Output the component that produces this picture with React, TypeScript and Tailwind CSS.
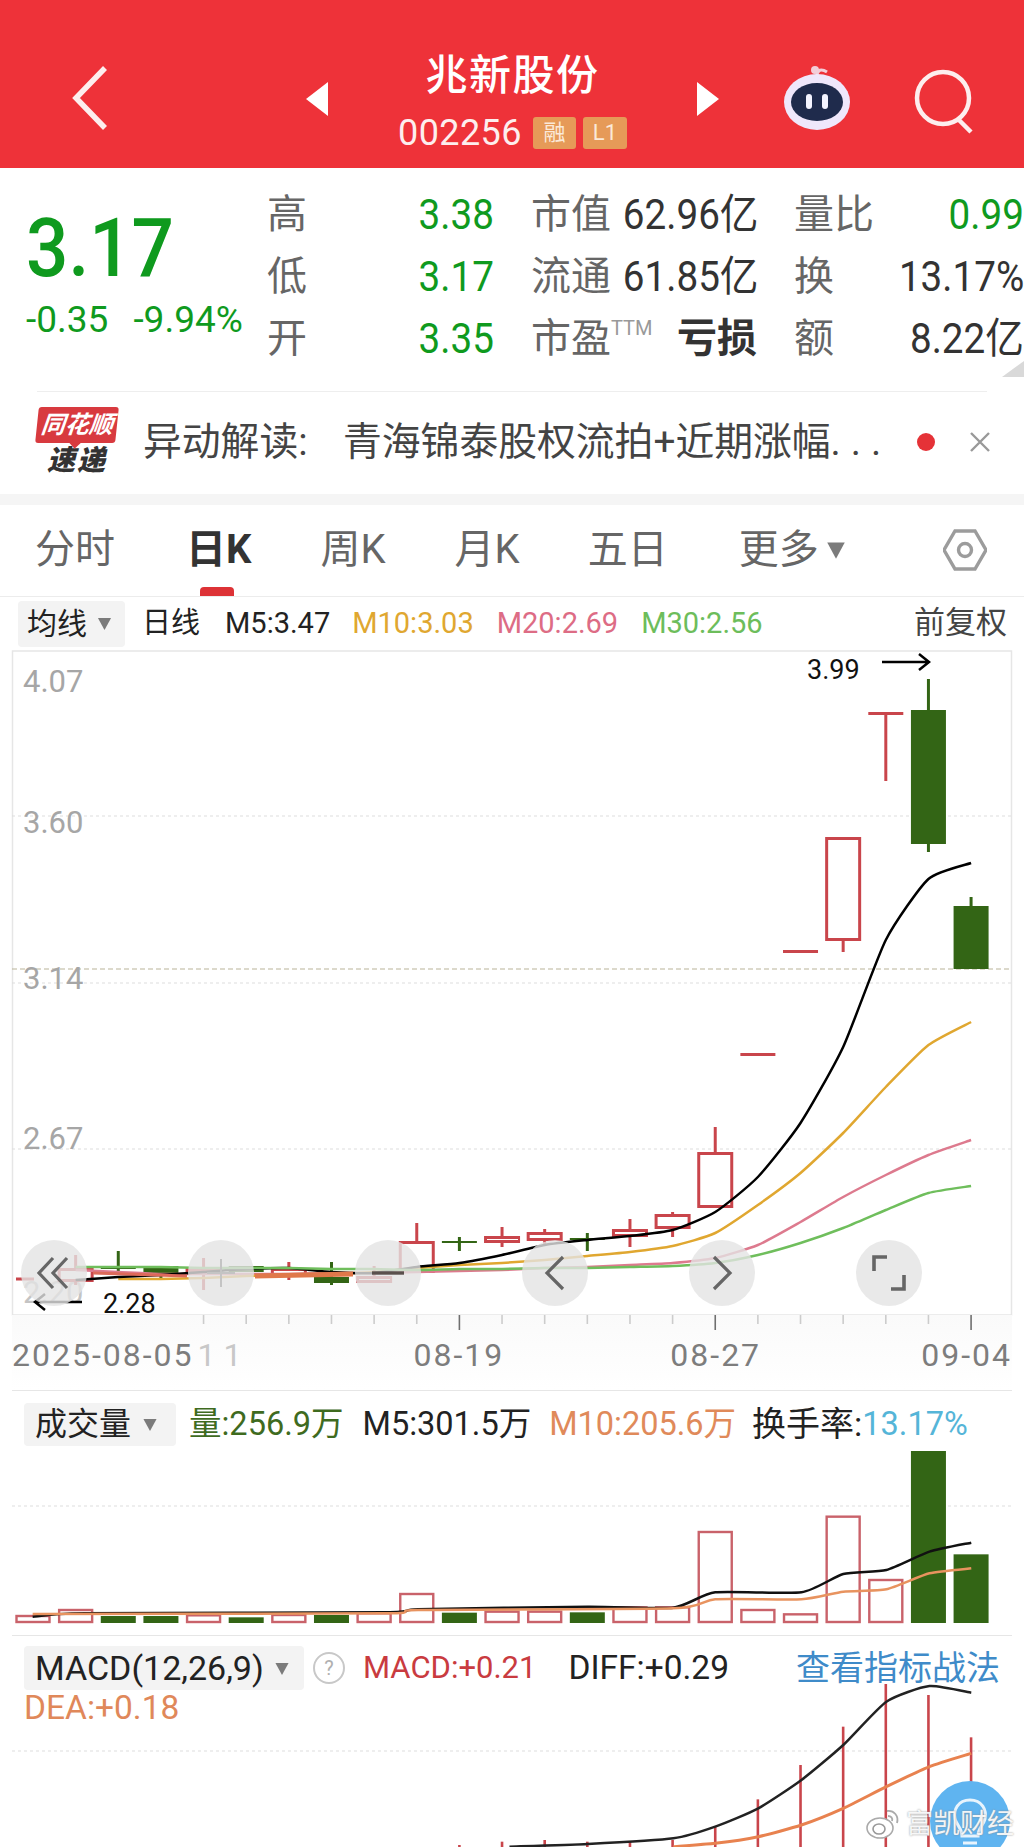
import React from "react";

const cx = (i: number) => 33 + 42.64 * i;
type P = [number, number];
const path = (pts: P[]) => {
  let d = `M${pts[0][0]} ${pts[0][1]}`;
  for (let k = 0; k < pts.length - 1; k++) {
    const p0 = pts[Math.max(k - 1, 0)];
    const p1 = pts[k];
    const p2 = pts[k + 1];
    const p3 = pts[Math.min(k + 2, pts.length - 1)];
    const c1x = p1[0] + (p2[0] - p0[0]) / 10;
    const c1y = p1[1] + (p2[1] - p0[1]) / 10;
    const c2x = p2[0] - (p3[0] - p1[0]) / 10;
    const c2y = p2[1] - (p3[1] - p1[1]) / 10;
    d += ` C${c1x} ${c1y} ${c2x} ${c2y} ${p2[0]} ${p2[1]}`;
  }
  return d;
};
const series = (start: number, ys: number[]) => path(ys.map((y, k) => [cx(start + k), y] as P));
const zx = (x: number) => x / 1.531;
const vy = (z: number) => 1380 + z / 3;
const zoomed = (pts: P[]) => path(pts.map(([x, y]) => [zx(x), vy(y)] as P));

type C = { i: number; t: number; b: number; h?: number; l?: number; k: "r" | "g" | "f" };
const candles: C[] = [
  { i: 1, t: 1268, b: 1282, h: 1255, l: 1285, k: "r" },
  { i: 2, t: 1266, b: 1269, h: 1251, l: 1272, k: "g" },
  { i: 3, t: 1266, b: 1273, l: 1278, k: "g" },
  { i: 4, t: 1268, b: 1274, h: 1258, l: 1290, k: "r" },
  { i: 5, t: 1266, b: 1272, k: "g" },
  { i: 6, t: 1268, b: 1276, h: 1262, l: 1280, k: "r" },
  { i: 7, t: 1277, b: 1283, h: 1262, l: 1285, k: "g" },
  { i: 8, t: 1276, b: 1283, h: 1266, k: "r" },
  { i: 9, t: 1241, b: 1273, h: 1223, k: "r" },
  { i: 10, t: 1241, b: 1243, h: 1237, l: 1251, k: "g" },
  { i: 11, t: 1236, b: 1243, h: 1227, l: 1247, k: "r" },
  { i: 12, t: 1232, b: 1241, h: 1229, l: 1246, k: "r" },
  { i: 13, t: 1238, b: 1240, h: 1233, l: 1251, k: "g" },
  { i: 14, t: 1229, b: 1237, h: 1219, l: 1247, k: "r" },
  { i: 15, t: 1214, b: 1229, h: 1212, l: 1237, k: "r" },
  { i: 16, t: 1152, b: 1208, h: 1127, k: "r" },
  { i: 17, t: 1053, b: 1056, k: "f" },
  { i: 18, t: 950, b: 953, k: "f" },
  { i: 19, t: 837, b: 941, l: 952, k: "r" },
  { i: 20, t: 712, b: 715, l: 781, k: "f" },
  { i: 21, t: 710, b: 844, h: 679, l: 852, k: "g" },
  { i: 22, t: 906, b: 969, h: 897, k: "g" },
];

const volTops = [708, 690, 708, 708, 706, 712, 705, 705, 700, 642, 698, 695, 695, 697, 682, 682, 456, 690, 703, 410, 600, 213, 523];
const volGreen = [2, 3, 5, 7, 10, 13, 21, 22];
const RED = "#c9454b";
const GREEN = "#336515";
const QGREEN = "text-[#0f9a1e]";

function Tri({ className }: { className: string }) {
  return (
    <svg viewBox="0 0 16 16" className={className}>
      <path d="M1 2 H15 L8 15 Z" fill="#7b7b7b" />
    </svg>
  );
}

function Robot() {
  return (
    <svg viewBox="0 0 72 68" className="h-[68px] w-[72px]">
      <path d="M36 12 C36 6 40 4 46 8" stroke="#f3cdd8" strokeWidth="3" fill="none" />
      <circle cx="34" cy="6" r="4" fill="#f3cdd8" />
      <ellipse cx="36" cy="38" rx="33" ry="28" fill="#efe7fb" />
      <ellipse cx="36" cy="38" rx="26" ry="19" fill="#1f2b4c" />
      <rect x="25" y="30" width="6" height="15" rx="3" fill="#f4f4ff" />
      <rect x="41" y="30" width="6" height="15" rx="3" fill="#f4f4ff" />
    </svg>
  );
}

function Header() {
  return (
    <div className="flex h-[168px] w-full shrink-0 items-center bg-[#ee3239] pt-[30px] text-white">
      <svg viewBox="0 0 40 66" className="ml-[70px] h-[66px] w-[40px] -translate-y-[1px]">
        <path d="M35 3 L6 33 L35 63" fill="none" stroke="#fdeeee" strokeWidth="5.5" />
      </svg>
      <svg viewBox="0 0 22 34" className="ml-[196px] h-[34px] w-[22px]">
        <path d="M22 0 V34 L0 17 Z" fill="#fff" />
      </svg>
      <div className="flex w-[369px] flex-col items-center">
        <div className="mb-[8px] text-[42px] leading-[60px] font-medium tracking-[1.5px]">兆新股份</div>
        <div className="flex items-center gap-[7px] leading-[38px]">
          <span className="mr-[4px] text-[36px] tracking-[0.4px] text-[#fdeeee]">002256</span>
          <span className="flex h-[32px] w-[43px] items-center justify-center rounded-[3px] bg-[#e69a58] text-[22px] text-[#fbe9d8]">融</span>
          <span className="flex h-[32px] w-[44px] items-center justify-center rounded-[3px] bg-[#e69a58] text-[22px] text-[#fbe9d8]">L1</span>
        </div>
      </div>
      <svg viewBox="0 0 22 34" className="h-[34px] w-[22px]">
        <path d="M0 0 V34 L22 17 Z" fill="#fff" />
      </svg>
      <div className="ml-[62px] -translate-y-[1px]">
        <Robot />
      </div>
      <svg viewBox="0 0 66 66" className="ml-[60px] h-[66px] w-[66px] translate-y-[2px]">
        <circle cx="30" cy="30" r="26" fill="none" stroke="#fdeeee" strokeWidth="4.5" />
        <path d="M46 52 L58 64" stroke="#fdeeee" strokeWidth="4.5" />
      </svg>
    </div>
  );
}

function Row({ a, b, c, plain }: { a: React.ReactNode; b: string; c?: string; plain?: boolean }) {
  return (
    <div className="flex items-center justify-between whitespace-nowrap">
      <span className="text-[40px] leading-[62px] text-[#666]">{a}</span>
      {plain ? (
        <span className="text-[40px] leading-[62px] font-bold text-[#333]">{b}</span>
      ) : (
        <span className={`inline-block origin-right scale-x-[0.92] text-[42px] leading-[62px] ${c ?? "text-[#333]"}`}>{b}</span>
      )}
    </div>
  );
}

function Quote() {
  return (
    <div className="relative flex h-[223px] w-full shrink-0 pt-[16px]">
      <div className={`ml-[26px] flex w-[241px] shrink-0 flex-col ${QGREEN}`}>
        <div className="mt-[18px] origin-left scale-x-[0.91] text-[82px] leading-[92px] font-medium">3.17</div>
        <div className="mt-[6px] flex gap-[25px] text-[37px] leading-[40px]">
          <span>-0.35</span>
          <span>-9.94%</span>
        </div>
      </div>
      <div className="grid w-[757px] shrink-0 grid-cols-[227px_226px_230px] content-start gap-x-[37px]">
        <Row a="高" b="3.38" c={QGREEN} />
        <Row a="市值" b="62.96亿" />
        <Row a="量比" b="0.99" c={QGREEN} />
        <Row a="低" b="3.17" c={QGREEN} />
        <Row a="流通" b="61.85亿" />
        <Row a="换" b="13.17%" />
        <Row a="开" b="3.35" c={QGREEN} />
        <Row
          a={
            <span className="flex items-start">
              市盈<span className="mt-[8px] text-[20px] leading-[24px] text-[#999]">TTM</span>
            </span>
          }
          b="亏损"
          plain
        />
        <Row a="额" b="8.22亿" />
      </div>
      <div className="absolute right-0 bottom-[14px] h-0 w-0 border-b-[16px] border-l-[22px] border-b-[#d9d9d9] border-l-transparent" />
    </div>
  );
}

function Banner() {
  return (
    <div className="mx-[37px] flex h-[103px] shrink-0 items-center border-t border-[#eeeeee] pb-[2px]">
      <div className="-ml-[1px] flex w-[82px] shrink-0 flex-col items-center">
        <div className="relative flex h-[36px] w-[80px] -skew-x-6 items-center justify-center rounded-[3px] bg-[#d83a3f] text-[24px] font-bold text-white italic">
          同花顺
          <span className="absolute -bottom-[4px] left-[36px] h-[8px] w-[8px] rotate-45 bg-[#d83a3f]" />
        </div>
        <div className="mt-[2px] text-[28px] leading-[32px] font-black tracking-[2px] text-[#333] italic">速递</div>
      </div>
      <div className="ml-[25px] flex items-center text-[38.8px] whitespace-nowrap text-[#444]">
        <span className="w-[200px]">异动解读:</span>
        <span>
          青海锦泰股权流拍+近期涨幅<span className="tracking-[10px]">...</span>
        </span>
      </div>
      <span className="ml-[26px] h-[18px] w-[18px] shrink-0 rounded-full bg-[#e53237]" />
      <svg viewBox="0 0 22 22" className="ml-[34px] h-[22px] w-[22px] shrink-0">
        <path d="M2 2 L20 20 M20 2 L2 20" stroke="#999" strokeWidth="2.4" />
      </svg>
    </div>
  );
}

function Tabs() {
  return (
    <div className="relative flex h-[92px] w-full shrink-0 items-center border-b border-[#ececec] pb-[1px] text-[40px] whitespace-nowrap text-[#666]">
      <span className="ml-[35px]">分时</span>
      <span className="ml-[71px] font-bold text-[#333]">日K</span>
      <span className="ml-[69px]">周K</span>
      <span className="ml-[69px]">月K</span>
      <span className="ml-[68px]">五日</span>
      <span className="ml-[71px]">更多</span>
      <Tri className="ml-[7px] h-[20px] w-[20px]" />
      <svg viewBox="0 0 44 44" className="ml-[97px] h-[44px] w-[44px]">
        <path d="M12 3 H32 L43 22 L32 41 H12 L1 22 Z" fill="none" stroke="#9c9c9c" strokeWidth="3.4" />
        <circle cx="22" cy="22" r="6.5" fill="none" stroke="#9c9c9c" strokeWidth="3.4" />
      </svg>
      <span className="absolute bottom-0 left-[200px] h-[9px] w-[34px] rounded-t-[4px] bg-[#dd3236]" />
    </div>
  );
}

function MaRow() {
  return (
    <div className="flex h-[53px] w-full shrink-0 items-center text-[29px] whitespace-nowrap text-[#222]">
      <div className="ml-[18px] flex h-[46px] w-[107px] items-center rounded-[4px] bg-[#f3f3f3] pl-[9px]">
        <span className="text-[30px]">均线</span>
        <Tri className="ml-[9px] h-[15px] w-[17px]" />
      </div>
      <span className="ml-[17px] text-[29px]">日线</span>
      <span className="ml-[25px]">M5:3.47</span>
      <span className="ml-[22px] text-[#e0a730]">M10:3.03</span>
      <span className="ml-[23px] text-[#dd6c85]">M20:2.69</span>
      <span className="ml-[23px] text-[#6dbd5b]">M30:2.56</span>
      <span className="mr-[17px] ml-auto text-[31px] text-[#444]">前复权</span>
    </div>
  );
}

function Bubble({ children }: { children?: React.ReactNode }) {
  return <div className="flex h-[66px] w-[66px] shrink-0 items-center justify-center rounded-full bg-[#e4e4e4]/80">{children}</div>;
}

function MainChart() {
  const ma5 = series(1, [1280, 1277, 1275, 1272, 1269, 1268, 1272, 1273, 1267, 1263, 1255, 1245, 1240, 1236, 1230, 1212, 1177, 1123, 1047, 940, 879, 863]);
  const ma10 = series(2, [1279, 1279, 1278, 1276, 1275, 1274, 1272, 1268, 1265, 1263, 1260, 1256, 1252, 1246, 1233, 1205, 1173, 1133, 1087, 1045, 1022]);
  const ma20 = series(1, [1270, 1272, 1274, 1274, 1274, 1274, 1273, 1273, 1272, 1271, 1270, 1268, 1267, 1265, 1263, 1258, 1245, 1222, 1197, 1175, 1155, 1140]);
  const ma30 = series(1, [1267, 1267, 1267, 1268, 1268, 1268, 1269, 1269, 1270, 1269, 1269, 1268, 1268, 1267, 1266, 1263, 1255, 1243, 1228, 1210, 1193, 1186]);
  return (
    <div className="relative mx-[12px] h-[665px] w-[1000px] shrink-0">
      <svg viewBox="12 650 1000 665" className="block h-[665px] w-[1000px] overflow-visible font-['Roboto','Noto_Sans_CJK_SC',sans-serif]">
        <rect x="12.5" y="651" width="999" height="664" fill="#fff" stroke="#e6e6e6" strokeWidth="1.5" />
        {[816, 983, 1149].map((y) => (
          <line key={y} x1="12" x2="1012" y1={y} y2={y} stroke="#dddddd" strokeDasharray="3 3" />
        ))}
        <line x1="12" x2="1012" y1="969" y2="969" stroke="#b9b398" strokeDasharray="5 3" />
        <g fontSize="31" fill="#a6a6a6">
          <text x="23" y="692">4.07</text>
          <text x="23" y="833">3.60</text>
          <text x="23" y="989">3.14</text>
          <text x="23" y="1149">2.67</text>
          <text x="23" y="1303" fill="#c4c4c4">2.20</text>
        </g>
        <line x1="16" x2="34" y1="1279" y2="1279" stroke={RED} strokeWidth="3" />
        {candles.map((c) => {
          const x = cx(c.i);
          const col = c.k === "g" ? GREEN : RED;
          return (
            <g key={c.i}>
              {c.h !== undefined && <line x1={x} x2={x} y1={c.h} y2={c.t} stroke={col} strokeWidth="3" />}
              {c.l !== undefined && <line x1={x} x2={x} y1={c.b} y2={c.l} stroke={col} strokeWidth="3" />}
              {c.k === "r" ? (
                <rect x={x - 16.5} y={c.t + 1.5} width="33" height={c.b - c.t - 3} fill="#fff" stroke={col} strokeWidth="3" />
              ) : (
                <rect x={x - 17.5} y={c.t} width="35" height={c.b - c.t} fill={col} />
              )}
            </g>
          );
        })}
        <path d={ma20} fill="none" stroke="#dd7a8e" strokeWidth="2.5" />
        <path d={ma10} fill="none" stroke="#e0a730" strokeWidth="2.5" />
        <path d={ma5} fill="none" stroke="#000" strokeWidth="2.5" />
        <path d={ma30} fill="none" stroke="#6fbe5c" strokeWidth="2.5" />
        <path d="M93 1273 L187 1276" fill="none" stroke="#dd6a5a" strokeWidth="3" />
        <path d="M255 1276 L353 1274" fill="none" stroke="#e0784a" strokeWidth="5" />
        <text x="807" y="679" fontSize="27" fill="#111">3.99</text>
        <path d="M882 662 H928 M919 654 L929 662 L919 670" fill="none" stroke="#000" strokeWidth="2.5" />
        <text x="103" y="1313" fontSize="27" fill="#111">2.28</text>
        <path d="M82 1302 H36 M45 1294 L35 1302 L45 1310" fill="none" stroke="#000" strokeWidth="2.5" />
      </svg>
      <div className="absolute top-[590px] left-[9px] flex gap-[101px]">
        <Bubble>
          <svg viewBox="0 0 36 36" className="h-[36px] w-[36px]">
            <path d="M17 3 L3 18 L17 33 M31 3 L17 18 L31 33" fill="none" stroke="#666" strokeWidth="3.2" />
          </svg>
        </Bubble>
        <Bubble>
          <svg viewBox="0 0 36 36" className="h-[36px] w-[36px]">
            <path d="M18 4 V32 M4 18 H32" fill="none" stroke="#c4c4c4" strokeWidth="2" />
          </svg>
        </Bubble>
        <Bubble>
          <svg viewBox="0 0 36 36" className="h-[36px] w-[36px]">
            <path d="M2 18 H34" fill="none" stroke="#5a504c" strokeWidth="3.4" />
          </svg>
        </Bubble>
        <Bubble>
          <svg viewBox="0 0 24 36" className="h-[36px] w-[24px]">
            <path d="M20 2 L4 18 L20 34" fill="none" stroke="#666" strokeWidth="3.2" />
          </svg>
        </Bubble>
        <Bubble>
          <svg viewBox="0 0 24 36" className="h-[36px] w-[24px]">
            <path d="M4 2 L20 18 L4 34" fill="none" stroke="#666" strokeWidth="3.2" />
          </svg>
        </Bubble>
        <Bubble>
          <svg viewBox="0 0 36 36" className="h-[36px] w-[36px]">
            <path d="M16 2 H3 V16 M20 34 H33 V20" fill="none" stroke="#666" strokeWidth="3.6" />
          </svg>
        </Bubble>
      </div>
    </div>
  );
}

function Axis() {
  return (
    <div className="relative mx-[12px] h-[75px] w-[1000px] shrink-0 bg-gradient-to-b from-[#fafafa] to-white text-[32px] leading-[40px] tracking-[2px] whitespace-nowrap text-[#7d7d7d]">
      <svg viewBox="12 1315 1000 20" className="block h-[20px] w-[1000px]">
        {Array.from({ length: 19 }, (_, k) => k + 4).map((i) => {
          const major = i === 10 || i === 16 || i === 22;
          return <line key={i} x1={cx(i)} x2={cx(i)} y1="1315" y2={major ? 1330 : 1324} stroke={major ? "#6f6f6f" : "#cccccc"} strokeWidth="1.6" />;
        })}
      </svg>
      <div className="flex h-[40px]">
        <span>2025-08-05</span>
        <span className="ml-[4px] tracking-[8px] text-[#c8c8c8]">11</span>
        <span className="ml-[164px]">08-19</span>
        <span className="ml-[166px]">08-27</span>
        <span className="ml-auto">09-04</span>
      </div>
    </div>
  );
}

function VolPanel() {
  const black = zoomed([[50, 710], [130, 700], [590, 697], [640, 688], [900, 680], [1031, 683], [1095, 637], [1227, 637], [1291, 582], [1357, 570], [1423, 515], [1487, 488]]);
  const orange = zoomed([[50, 702], [590, 700], [640, 690], [1031, 685], [1095, 658], [1227, 658], [1291, 635], [1357, 628], [1423, 580], [1487, 565]]);
  return (
    <div className="mx-[12px] h-[234px] w-[1000px] shrink-0 border-t border-[#e6e6e6]">
      <div className="flex h-[55px] items-end text-[32.5px] leading-[43px] whitespace-nowrap text-[#222]">
        <div className="ml-[12px] flex h-[43px] w-[152px] items-center rounded-[4px] bg-[#f3f3f3] pl-[11px] text-[32px]">
          成交量
          <Tri className="ml-[10px] h-[15px] w-[18px]" />
        </div>
        <span className="ml-[13px] text-[#3f6b1f]">量:256.9万</span>
        <span className="ml-[19px]">M5:301.5万</span>
        <span className="ml-[18px] text-[#e08a5a]">M10:205.6万</span>
        <span className="ml-[16px] text-[34px]">换手率:</span>
        <span className="text-[#55b5d8]">13.17%</span>
      </div>
      <svg viewBox="12 1446 1000 178" className="block h-[178px] w-[1000px]">
        <line x1="12" x2="1012" y1="1506" y2="1506" stroke="#dddddd" strokeDasharray="3 3" />
        {volTops.map((z, i) => {
          const top = vy(z);
          const x = cx(i);
          return volGreen.includes(i) ? (
            <rect key={i} x={x - 17.5} y={top} width="35" height={1623 - top} fill={GREEN} />
          ) : (
            <rect key={i} x={x - 16.5} y={top} width="33" height={1622 - top} fill="#fff" stroke="#c9626a" strokeWidth="2.4" />
          );
        })}
        <path d={black} fill="none" stroke="#111" strokeWidth="2.5" />
        <path d={orange} fill="none" stroke="#e8935f" strokeWidth="2.5" />
      </svg>
    </div>
  );
}

function MacdPanel() {
  const tops: P[] = [[10, 1395], [11, 1385], [12, 1380], [13, 1385], [14, 1385], [15, 1380], [16, 1340], [17, 1258], [18, 1155], [19, 1040], [20, 912], [21, 945], [22, 1072]];
  const black = zoomed([[780, 1400], [900, 1392], [1031, 1375], [1095, 1340], [1161, 1285], [1227, 1200], [1291, 1095], [1357, 965], [1423, 918], [1487, 938]]);
  const orange = zoomed([[1031, 1400], [1095, 1390], [1161, 1370], [1227, 1335], [1291, 1285], [1357, 1220], [1423, 1160], [1487, 1120]]);
  return (
    <div className="relative mx-[12px] mt-[11px] h-[212px] w-[1000px] shrink-0 border-t border-[#e6e6e6]">
      <svg viewBox="12 1636 1000 211" className="absolute top-0 left-0 h-[211px] w-[1000px]">
        <line x1="12" x2="1012" y1="1751" y2="1751" stroke="#dddddd" strokeDasharray="3 3" />
        {tops.map(([i, z]) => (
          <line key={i} x1={cx(i)} x2={cx(i)} y1={vy(z)} y2="1850" stroke={RED} strokeWidth="2.6" />
        ))}
        <path d={black} fill="none" stroke="#222" strokeWidth="2.5" />
        <path d={orange} fill="none" stroke="#e8824f" strokeWidth="3" />
      </svg>
      <div className="relative mt-[10px] flex h-[44px] items-center text-[31px] whitespace-nowrap text-[#222]">
        <div className="ml-[12px] flex h-[44px] w-[280px] items-center rounded-[4px] bg-[#f3f3f3] pl-[11px] text-[34px]">
          MACD(12,26,9)
          <Tri className="ml-[9px] h-[15px] w-[18px]" />
        </div>
        <span className="ml-[9px] flex h-[32px] w-[32px] items-center justify-center rounded-full border-2 border-[#c8c8c8] text-[20px] text-[#b0b0b0]">?</span>
        <span className="ml-[18px] text-[#c93b3f]">MACD:+0.21</span>
        <span className="ml-[32px] text-[33.5px]">DIFF:+0.29</span>
        <span className="mr-[12px] ml-auto text-[34px] text-[#3f8bc9]">查看指标战法</span>
      </div>
      <div className="relative ml-[12px] text-[33.5px] leading-[36px] text-[#e0885a]">DEA:+0.18</div>
      <div className="absolute top-[145px] left-[918px] flex h-[80px] w-[80px] items-center justify-center rounded-full bg-[#5fb4f0]">
        <svg viewBox="0 0 40 60" className="mt-[10px] h-[60px] w-[40px]">
          <path d="M20 4 C8 4 3 14 5 23 C7 30 12 32 12 40 H28 C28 32 33 30 35 23 C37 14 32 4 20 4 Z" fill="none" stroke="#e8f4fd" strokeWidth="3" />
          <path d="M13 47 H27 M15 54 H25" stroke="#e8f4fd" strokeWidth="3" />
        </svg>
      </div>
      <div className="absolute top-[171px] left-[853px] flex items-center gap-[5px] text-[27px] leading-[34px] whitespace-nowrap text-white/90 [text-shadow:0_0_2px_#888]">
        <svg viewBox="0 0 36 34" className="h-[34px] w-[36px]">
          <ellipse cx="15" cy="21" rx="13" ry="10" fill="#fff" stroke="#aaa" strokeWidth="1.6" />
          <ellipse cx="14" cy="22" rx="6" ry="5" fill="none" stroke="#999" strokeWidth="1.6" />
          <path d="M22 4 C29 3 34 9 32 16 M23 9 C26 9 28 11 27 14" fill="none" stroke="#aaa" strokeWidth="1.8" />
        </svg>
        富凯财经
      </div>
    </div>
  );
}

export default function App() {
  return (
    <div className="flex h-[1847px] w-[1024px] flex-col overflow-hidden bg-white font-['Roboto','Noto_Sans_CJK_SC',sans-serif]">
      <Header />
      <Quote />
      <Banner />
      <div className="h-[11px] w-full shrink-0 bg-[#f5f5f5]" />
      <Tabs />
      <MaRow />
      <MainChart />
      <Axis />
      <VolPanel />
      <MacdPanel />
    </div>
  );
}
